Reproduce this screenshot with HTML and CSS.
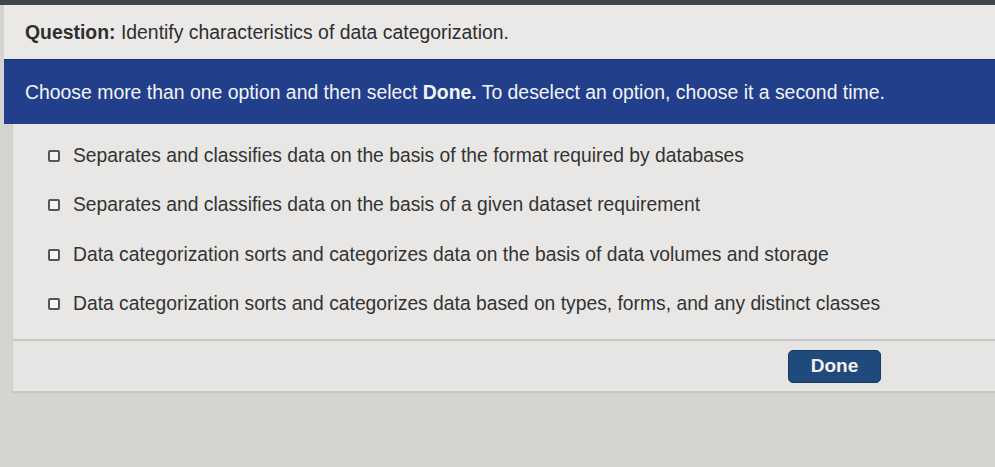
FILE: index.html
```html
<!DOCTYPE html>
<html lang="en">
<head>
    <meta charset="UTF-8">
    <title>Question</title>
    <link rel="stylesheet" href="styles.css">
</head>
<body>

    <div class="top-strip"></div>

    <div class="page">
        <div class="question">
            <b>Question:</b> Identify characteristics of data categorization.
        </div>

        <div class="banner">
            Choose more than one option and then select <b>Done.</b> To deselect an option, choose it a second time.
        </div>

        <div class="options">
            <div class="option"><span class="box"></span>Separates and classifies data on the basis of the format required by databases</div>
            <div class="option"><span class="box"></span>Separates and classifies data on the basis of a given dataset requirement</div>
            <div class="option"><span class="box"></span>Data categorization sorts and categorizes data on the basis of data volumes and storage</div>
            <div class="option"><span class="box"></span>Data categorization sorts and categorizes data based on types, forms, and any distinct classes</div>
        </div>

        <div class="footer">
            <button class="done">Done</button>
        </div>
    </div>

</body>
</html>
```

FILE: styles.css
```css
* {
    margin: 0;
    padding: 0;
    box-sizing: border-box;
    font-family: "Liberation Sans", Arial, sans-serif;
}

body {
    background-color: #d6d4d1;
    color: #333;
}

.top-strip {
    height: 5px;
    background: #3d4649;
}

.page {
    margin-left: 4px;
}

.question {
    background: #eae9e7;
    height: 54px;
    padding: 16px 0 0 21px;
    font-size: 19.4px;
    color: #2e2e2e;
}

.banner {
    background: #213f8b;
    color: #f4f4f4;
    height: 65px;
    padding: 21px 0 0 21px;
    font-size: 19.4px;
    border-top: 1px solid #1a2f66;
}

.options {
    margin-left: 8px;
    background: #e8e7e5;
    padding: 7px 0 10px 35px;
    border-left: 1px solid #d0cecb;
}

.option {
    display: flex;
    align-items: center;
    height: 49.5px;
    font-size: 19.3px;
    color: #333;
}

.box {
    width: 12px;
    height: 12px;
    border: 2px solid #555;
    border-radius: 2px;
    margin-right: 13px;
    background: #f4f4f3;
}

.footer {
    margin-left: 8px;
    background: #e6e5e3;
    border-top: 2px solid #c9c7c4;
    border-bottom: 2px solid #c9c7c4;
    border-left: 1px solid #d0cecb;
    height: 54px;
    display: flex;
    align-items: center;
    justify-content: flex-end;
    padding-right: 114px;
}

.done {
    background: #1f4a7b;
    color: #f2f2f2;
    border: 1px solid #163a62;
    border-radius: 5px;
    width: 93px;
    height: 33px;
    font-size: 19px;
    font-weight: bold;
}
```
